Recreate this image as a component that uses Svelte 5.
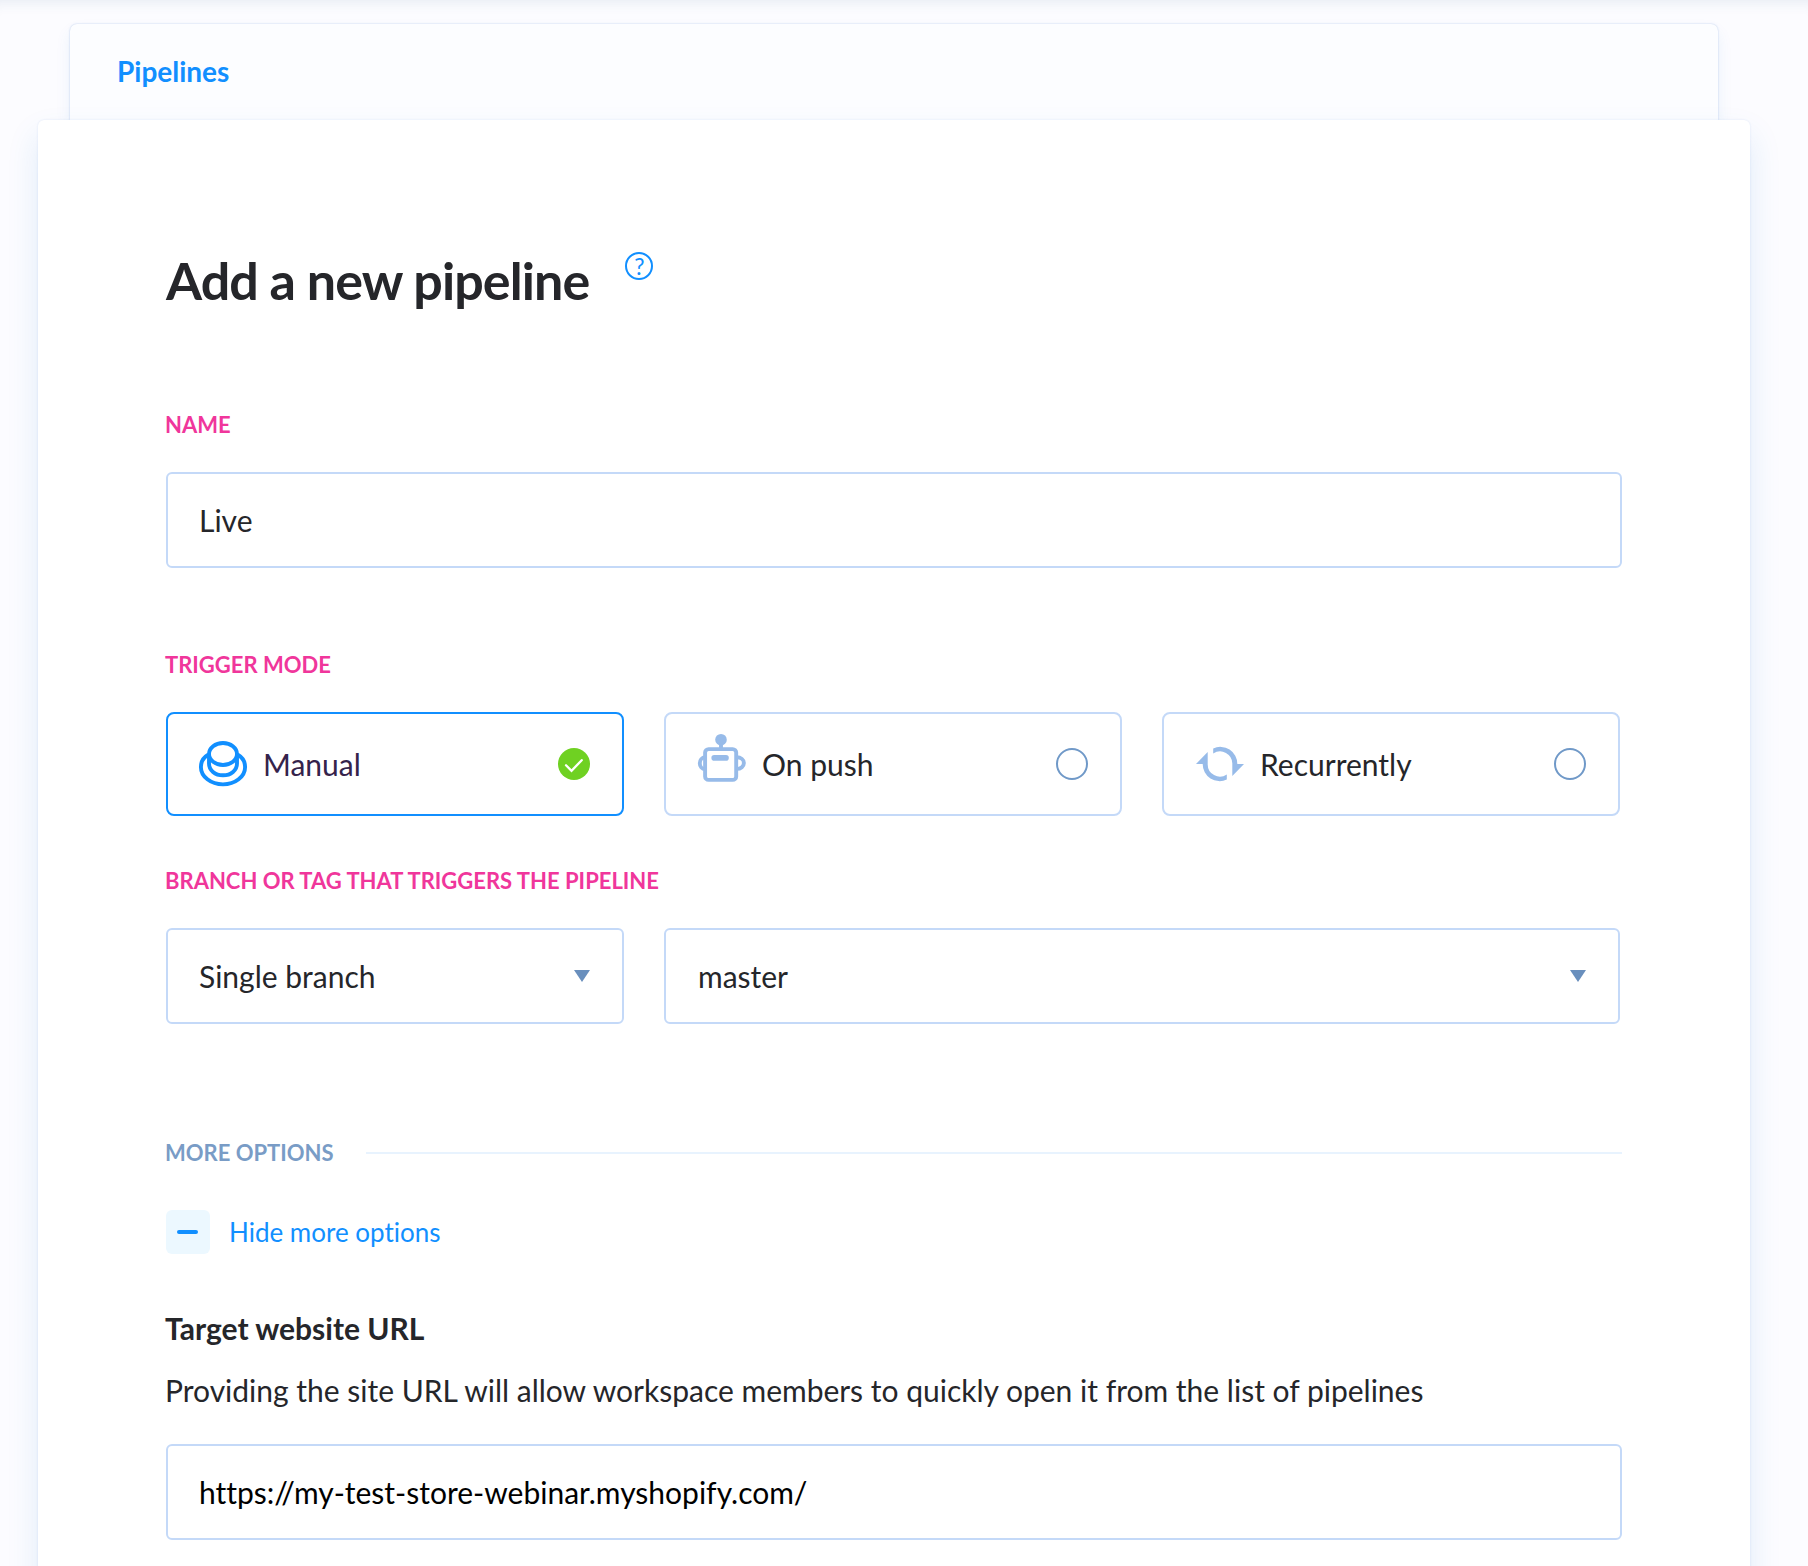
<script lang="ts">
  let name = "Live";
  let url = "https://my-test-store-webinar.myshopify.com/";
  let mode = "manual";
  let showOptions = true;

  const modes = [
    { id: "manual", label: "Manual" },
    { id: "push", label: "On push" },
    { id: "recurrent", label: "Recurrently" },
  ];
</script>

<div class="page">
  <nav class="breadcrumb">
    <a href="#pipelines">Pipelines</a>
  </nav>

  <main class="card">
    <header class="title">
      <h1>Add a new pipeline</h1>
      <span class="help">?</span>
    </header>

    <label class="label" for="name">NAME</label>
    <input id="name" class="input" type="text" bind:value={name} />

    <div class="label label-trigger">TRIGGER MODE</div>
    <div class="modes">
      {#each modes as item}
        <button
          class="mode"
          class:selected={mode === item.id}
          on:click={() => (mode = item.id)}
        >
          <svg class="mode-icon" viewBox="0 0 48 48">
            {#if item.id === "manual"}
              <g fill="none" stroke="currentColor" stroke-width="3.9">
                <ellipse cx="24" cy="14" rx="14" ry="11" />
                <path d="M10 14v9.5c0 6.7 6 11.8 14 11.8s14-5.1 14-11.8V14" />
                <path d="M9.5 14.5C4.8 17.2 1.9 21.8 1.9 27c0 9.7 9.9 17.4 22.1 17.4S46.1 36.7 46.1 27c0-5.2-2.9-9.8-7.6-12.5" />
              </g>
            {:else if item.id === "push"}
              <g fill="none" stroke="currentColor" stroke-width="3.9">
                <rect x="7.1" y="9.1" width="31.1" height="30.8" rx="3.5" />
                <path d="M23 2v6" />
                <path d="M7.1 17.3c-3.3 0-5.3 2.9-5.3 5.9s2 5.9 5.3 5.9M38.7 17.3c4.2 0 7.2 2.5 7.2 5.7s-3 5.9-7.2 5.9" />
                <path d="M16.2 17.9h11.8" stroke-width="5.6" stroke-linecap="round" />
              </g>
              <circle cx="23" cy="-0.3" r="5.8" fill="currentColor" />
            {:else}
              <g fill="currentColor">
                <path d="M17.2 8.4A17 17 0 0 1 41.3 24H48L36.3 36V24A12.2 12.2 0 0 0 17.2 13.6z" />
                <path d="M30.8 39.6A17 17 0 0 1 6.7 24H0L11.7 12V24A12.2 12.2 0 0 0 30.8 34.4z" />
              </g>
            {/if}
          </svg>
          <span class="mode-label">{item.label}</span>
          {#if mode === item.id}
            <svg class="check" viewBox="0 0 32 32">
              <circle cx="16" cy="16" r="16" fill="#6fd122" />
              <path
                d="M8 17.2l5.5 5.6L23.7 12.2"
                fill="none"
                stroke="#fff"
                stroke-width="2.3"
                stroke-linecap="round"
              />
            </svg>
          {:else}
            <span class="radio"></span>
          {/if}
        </button>
      {/each}
    </div>

    <div class="label label-branch">BRANCH OR TAG THAT TRIGGERS THE PIPELINE</div>
    <div class="selects">
      <button class="select">Single branch <i class="arrow"></i></button>
      <button class="select">master <i class="arrow"></i></button>
    </div>

    <div class="section">
      <span>MORE OPTIONS</span>
      <hr />
    </div>

    <button class="toggle" on:click={() => (showOptions = !showOptions)}>
      <span class="toggle-icon" class:plus={!showOptions}></span>
      {showOptions ? "Hide more options" : "Show more options"}
    </button>

    {#if showOptions}
      <h2>Target website URL</h2>
      <p>
        Providing the site URL will allow workspace members to quickly open it
        from the list of pipelines
      </p>
      <input class="input" type="text" bind:value={url} />
    {/if}
  </main>
</div>

<style>
  :global(body) {
    overflow: hidden;
    background: #fcfcff;
  }

  .page {
    box-sizing: border-box;
    height: 1566px;
    padding: 24px 58px 0 38px;
    overflow: hidden;
    font-family: Lato, sans-serif;
    font-size: 30px;
    font-variant-ligatures: none;
    color: #25262a;
    box-shadow: inset 0 14px 14px -12px rgba(50, 90, 140, 0.11);
  }

  button {
    padding: 0;
    border: 0;
    background: none;
    font: inherit;
    font-variant-ligatures: none;
    color: inherit;
    text-align: left;
  }

  /* Breadcrumb sheet behind the card */

  .breadcrumb {
    box-sizing: border-box;
    height: 96px;
    margin: 0 32px;
    padding: 30px 47px 0;
    border-radius: 7px 7px 0 0;
    background: #fcfdff;
    box-shadow:
      0 0 2px rgba(60, 110, 200, 0.34),
      0 8px 16px rgba(30, 120, 200, 0.08);
  }

  .breadcrumb a {
    display: block;
    font-size: 28px;
    line-height: 34px;
    font-weight: 700;
    color: #118fff;
    text-decoration: none;
  }

  .card {
    position: relative;
    box-sizing: border-box;
    height: 1600px;
    padding: 129px 128px 0;
    border-radius: 6px;
    background: #fff;
    box-shadow:
      0 0 2px rgba(60, 110, 200, 0.16),
      0 16px 32px rgba(30, 120, 210, 0.13);
  }

  .title {
    display: flex;
    gap: 36px;
    height: 163px;
  }

  h1 {
    margin: 0;
    font-size: 52px;
    line-height: 62px;
    font-weight: 700;
    letter-spacing: -0.9px;
  }

  .help {
    box-sizing: border-box;
    width: 28px;
    height: 28px;
    margin-top: 3px;
    border: 2px solid #118fff;
    border-radius: 50%;
    font-size: 23px;
    line-height: 24px;
    text-align: center;
    color: #118fff;
  }

  .label,
  .section {
    display: block;
    height: 60px;
    margin-left: -1px;
    font-size: 22px;
    line-height: 26px;
    font-weight: 700;
    color: #f0369b;
  }

  .label-trigger {
    margin-top: 84px;
  }

  .label-branch {
    margin-top: 52px;
  }

  .input {
    display: block;
    box-sizing: border-box;
    width: 100%;
    height: 96px;
    padding: 0 31px;
    border: 2px solid #c4d9f8;
    border-radius: 6px;
    background: #fff;
    font: inherit;
    font-variant-ligatures: none;
    color: inherit;
    outline: none;
  }

  p + .input {
    color: #000;
  }

  /* Trigger modes */

  .modes,
  .selects {
    display: grid;
    grid-template-columns: repeat(3, 458px);
    gap: 40px;
  }

  .mode {
    display: flex;
    align-items: center;
    box-sizing: border-box;
    height: 104px;
    padding: 0 32px;
    border: 2px solid #c4d9f8;
    border-radius: 8px;
  }

  .mode:first-child,
  .select:first-child {
    padding-left: 31px;
  }

  .mode-icon {
    width: 48px;
    height: 48px;
    margin-right: 16px;
    overflow: visible;
    color: #97bbe9;
  }

  .mode-label {
    flex: 1;
  }

  .selected {
    border-color: #118fff;
    color: #35234b;
  }

  .selected .mode-icon {
    color: #118fff;
  }

  .check {
    width: 32px;
    height: 32px;
  }

  .radio {
    box-sizing: border-box;
    width: 32px;
    height: 32px;
    border: 2px solid #7099c8;
    border-radius: 50%;
  }

  /* Branch selects */

  .select {
    display: flex;
    align-items: center;
    justify-content: space-between;
    box-sizing: border-box;
    height: 96px;
    padding: 0 32px;
    border: 2px solid #c4d9f8;
    border-radius: 6px;
  }

  .select:last-child {
    grid-column: span 2;
  }

  .arrow {
    width: 16px;
    height: 12px;
    background: #698fbd;
    clip-path: polygon(0 0, 100% 0, 50% 100%);
  }

  /* More options */

  .section {
    display: flex;
    gap: 32px;
    height: 70px;
    margin-top: 116px;
    color: #799cc6;
  }

  hr {
    flex: 1;
    height: 2px;
    margin: 12px 0 0;
    border: 0;
    background: #e8f3fe;
  }

  .toggle {
    display: flex;
    align-items: center;
    gap: 19px;
    font-size: 26px;
    color: #118fff;
  }

  .toggle-icon {
    display: grid;
    place-items: center;
    box-sizing: border-box;
    width: 44px;
    height: 44px;
    padding-right: 2px;
    border-radius: 6px;
    background: #ecf8ff;
  }

  .toggle-icon::before,
  .plus::after {
    content: "";
    grid-area: 1 / 1;
    width: 21px;
    height: 4px;
    border-radius: 2px;
    background: #118fff;
  }

  .plus::after {
    transform: rotate(90deg);
  }

  h2 {
    margin: 56px 0 0 -1px;
    font-size: 30px;
    line-height: 36px;
    font-weight: 700;
  }

  p {
    margin: 26px 0 36px -1px;
    line-height: 36px;
    white-space: nowrap;
  }
</style>
